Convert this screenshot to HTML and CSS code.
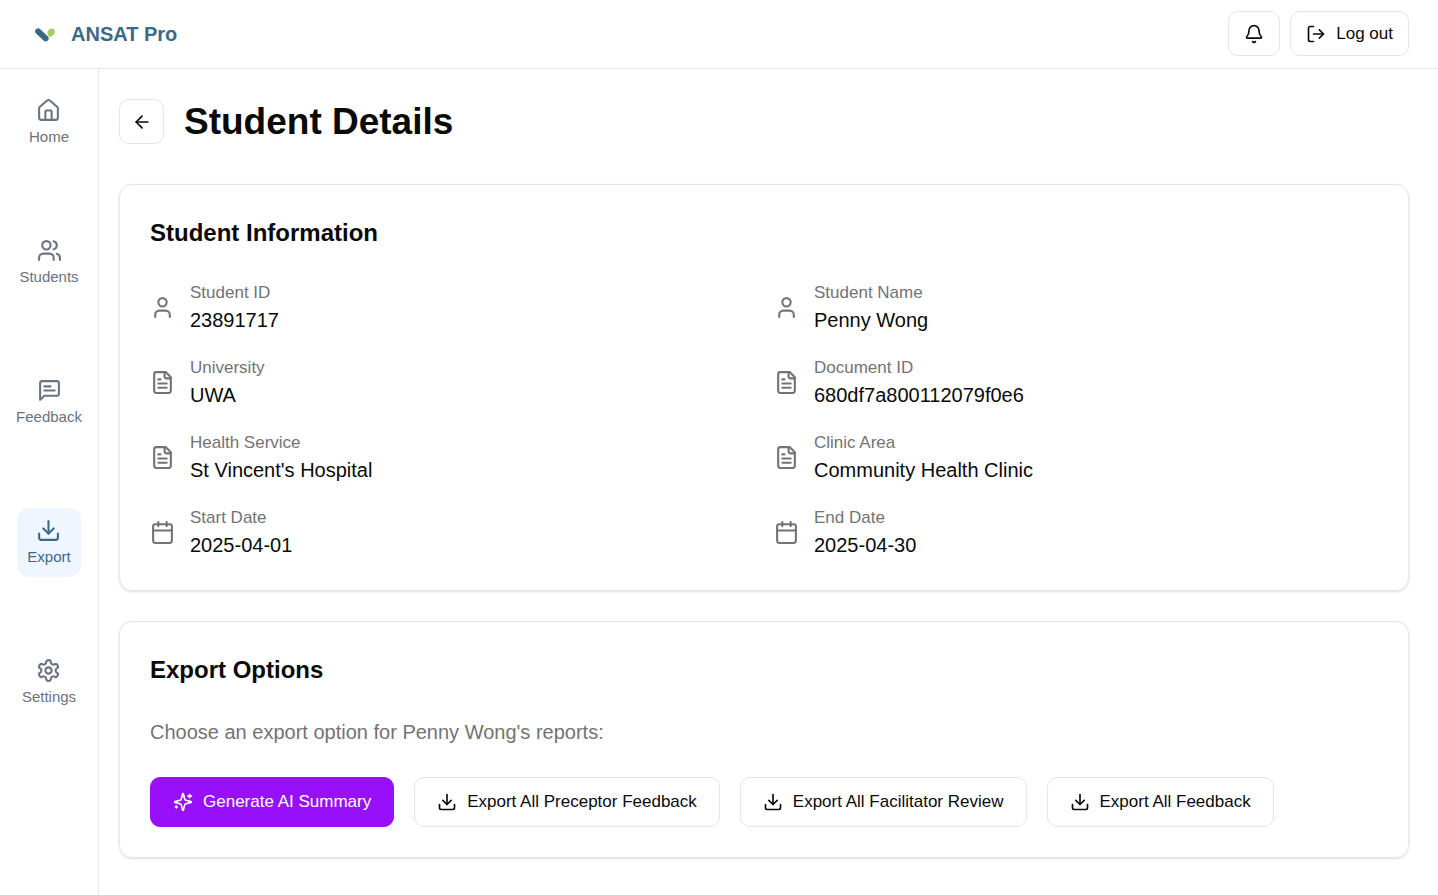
FILE: index.html
```html
<!DOCTYPE html>
<html lang="en">
<head>
<meta charset="utf-8">
<meta name="viewport" content="width=device-width, initial-scale=1">
<title>ANSAT Pro - Student Details</title>
<link rel="stylesheet" href="styles.css">
</head>
<body>
<svg class="sprite" aria-hidden="true">
  <symbol id="home" viewBox="0 0 24 24"><path d="M15 21v-8a1 1 0 0 0-1-1h-4a1 1 0 0 0-1 1v8"/><path d="M3 10a2 2 0 0 1 .709-1.528l7-5.999a2 2 0 0 1 2.582 0l7 5.999A2 2 0 0 1 21 10v9a2 2 0 0 1-2 2H5a2 2 0 0 1-2-2z"/></symbol>
  <symbol id="users" viewBox="0 0 24 24"><path d="M16 21v-2a4 4 0 0 0-4-4H6a4 4 0 0 0-4 4v2"/><circle cx="9" cy="7" r="4"/><path d="M22 21v-2a4 4 0 0 0-3-3.87"/><path d="M16 3.13a4 4 0 0 1 0 7.75"/></symbol>
  <symbol id="message" viewBox="0 0 24 24"><path d="M21 15a2 2 0 0 1-2 2H7l-4 4V5a2 2 0 0 1 2-2h14a2 2 0 0 1 2 2z"/><path d="M13 8H7"/><path d="M17 12H7"/></symbol>
  <symbol id="download" viewBox="0 0 24 24"><path d="M21 15v4a2 2 0 0 1-2 2H5a2 2 0 0 1-2-2v-4"/><path d="m7 10 5 5 5-5"/><path d="M12 15V3"/></symbol>
  <symbol id="settings" viewBox="0 0 24 24"><path d="M12.22 2h-.44a2 2 0 0 0-2 2v.18a2 2 0 0 1-1 1.73l-.43.25a2 2 0 0 1-2 0l-.15-.08a2 2 0 0 0-2.73.73l-.22.38a2 2 0 0 0 .73 2.73l.15.1a2 2 0 0 1 1 1.72v.51a2 2 0 0 1-1 1.74l-.15.09a2 2 0 0 0-.73 2.73l.22.38a2 2 0 0 0 2.73.73l.15-.08a2 2 0 0 1 2 0l.43.25a2 2 0 0 1 1 1.73V20a2 2 0 0 0 2 2h.44a2 2 0 0 0 2-2v-.18a2 2 0 0 1 1-1.73l.43-.25a2 2 0 0 1 2 0l.15.08a2 2 0 0 0 2.73-.73l.22-.39a2 2 0 0 0-.73-2.73l-.15-.08a2 2 0 0 1-1-1.74v-.5a2 2 0 0 1 1-1.74l.15-.09a2 2 0 0 0 .73-2.73l-.22-.38a2 2 0 0 0-2.73-.73l-.15.08a2 2 0 0 1-2 0l-.43-.25a2 2 0 0 1-1-1.73V4a2 2 0 0 0-2-2z"/><circle cx="12" cy="12" r="3"/></symbol>
  <symbol id="bell" viewBox="0 0 24 24"><path d="M10.268 21a2 2 0 0 0 3.464 0"/><path d="M3.262 15.326A1 1 0 0 0 4 17h16a1 1 0 0 0 .74-1.673C19.41 13.956 18 12.499 18 8A6 6 0 0 0 6 8c0 4.499-1.411 5.956-2.738 7.326"/></symbol>
  <symbol id="logout" viewBox="0 0 24 24"><path d="M9 21H5a2 2 0 0 1-2-2V5a2 2 0 0 1 2-2h4"/><path d="m16 17 5-5-5-5"/><path d="M21 12H9"/></symbol>
  <symbol id="back" viewBox="0 0 24 24"><path d="m12 19-7-7 7-7"/><path d="M19 12H5"/></symbol>
  <symbol id="user" viewBox="0 0 24 24"><path d="M19 21v-2a4 4 0 0 0-4-4H9a4 4 0 0 0-4 4v2"/><circle cx="12" cy="7" r="4"/></symbol>
  <symbol id="file" viewBox="0 0 24 24"><path d="M15 2H6a2 2 0 0 0-2 2v16a2 2 0 0 0 2 2h12a2 2 0 0 0 2-2V7Z"/><path d="M14 2v4a2 2 0 0 0 2 2h4"/><path d="M10 9H8"/><path d="M16 13H8"/><path d="M16 17H8"/></symbol>
  <symbol id="calendar" viewBox="0 0 24 24"><path d="M8 2v4"/><path d="M16 2v4"/><rect width="18" height="18" x="3" y="4" rx="2"/><path d="M3 10h18"/></symbol>
  <symbol id="sparkles" viewBox="0 0 24 24"><path d="M9.937 15.5A2 2 0 0 0 8.5 14.063l-6.135-1.582a.5.5 0 0 1 0-.962L8.5 9.936A2 2 0 0 0 9.937 8.5l1.582-6.135a.5.5 0 0 1 .963 0L14.063 8.5A2 2 0 0 0 15.5 9.937l6.135 1.581a.5.5 0 0 1 0 .964L15.5 14.063a2 2 0 0 0-1.437 1.437l-1.582 6.135a.5.5 0 0 1-.963 0z"/><path d="M20 3v4"/><path d="M22 5h-4"/><path d="M4 17v2"/><path d="M5 18H3"/></symbol>
</svg>

<header class="topbar">
  <a class="brand" href="#">
    <svg class="brand-mark" viewBox="0 0 30 30" aria-hidden="true">
      <path class="leaf" d="M19.8 18.2C18.6 17.2 17.6 15.6 17.3 14 17.6 11.4 19.4 9.4 21.8 9.4 23.8 9.4 25.1 10.9 25 12.8 24.8 15 22.6 16.6 19.8 18.2Z"/>
      <path class="stem" d="M8.2 12.4 15.6 19.4"/>
    </svg>
    <span>ANSAT Pro</span>
  </a>
  <div class="topbar-actions">
    <button class="btn btn-compact" type="button" aria-label="Notifications"><svg class="icon"><use href="#bell"/></svg></button>
    <button class="btn btn-compact" type="button"><svg class="icon"><use href="#logout"/></svg>Log out</button>
  </div>
</header>

<div class="shell">
  <nav class="sidebar" aria-label="Main">
    <a class="nav-item" href="#"><svg class="icon icon-lg"><use href="#home"/></svg>Home</a>
    <a class="nav-item" href="#"><svg class="icon icon-lg"><use href="#users"/></svg>Students</a>
    <a class="nav-item" href="#"><svg class="icon icon-lg"><use href="#message"/></svg>Feedback</a>
    <a class="nav-item active" href="#" aria-current="page"><svg class="icon icon-lg"><use href="#download"/></svg>Export</a>
    <a class="nav-item" href="#"><svg class="icon icon-lg"><use href="#settings"/></svg>Settings</a>
  </nav>

  <main class="content">
    <div class="page-head">
      <button class="btn btn-square" type="button" aria-label="Back"><svg class="icon"><use href="#back"/></svg></button>
      <h1 class="page-title">Student Details</h1>
    </div>

    <section class="card">
      <h2 class="card-title">Student Information</h2>
      <dl class="info-grid">
        <div class="info"><svg class="icon icon-lg"><use href="#user"/></svg><div><dt>Student ID</dt><dd>23891717</dd></div></div>
        <div class="info"><svg class="icon icon-lg"><use href="#user"/></svg><div><dt>Student Name</dt><dd>Penny Wong</dd></div></div>
        <div class="info"><svg class="icon icon-lg"><use href="#file"/></svg><div><dt>University</dt><dd>UWA</dd></div></div>
        <div class="info"><svg class="icon icon-lg"><use href="#file"/></svg><div><dt>Document ID</dt><dd>680df7a800112079f0e6</dd></div></div>
        <div class="info"><svg class="icon icon-lg"><use href="#file"/></svg><div><dt>Health Service</dt><dd>St Vincent's Hospital</dd></div></div>
        <div class="info"><svg class="icon icon-lg"><use href="#file"/></svg><div><dt>Clinic Area</dt><dd>Community Health Clinic</dd></div></div>
        <div class="info"><svg class="icon icon-lg"><use href="#calendar"/></svg><div><dt>Start Date</dt><dd>2025-04-01</dd></div></div>
        <div class="info"><svg class="icon icon-lg"><use href="#calendar"/></svg><div><dt>End Date</dt><dd>2025-04-30</dd></div></div>
      </dl>
    </section>

    <section class="card">
      <h2 class="card-title">Export Options</h2>
      <p class="hint">Choose an export option for Penny Wong's reports:</p>
      <div class="actions">
        <button class="btn btn-primary" type="button"><svg class="icon"><use href="#sparkles"/></svg>Generate AI Summary</button>
        <button class="btn" type="button"><svg class="icon"><use href="#download"/></svg>Export All Preceptor Feedback</button>
        <button class="btn" type="button"><svg class="icon"><use href="#download"/></svg>Export All Facilitator Review</button>
        <button class="btn" type="button"><svg class="icon"><use href="#download"/></svg>Export All Feedback</button>
      </div>
    </section>
  </main>
</div>
</body>
</html>
```

FILE: styles.css
```css
* {
  box-sizing: border-box;
}

body {
  margin: 0;
  min-height: 100vh;
  display: flex;
  flex-direction: column;
  background: #fff;
  color: #0a0a0a;
  font-family: "Liberation Sans", Arial, sans-serif;
  font-size: 20px;
  line-height: 30px;
}

h1, h2, p, dl, dd {
  margin: 0;
}

a {
  color: inherit;
  text-decoration: none;
}

.sprite {
  position: absolute;
  width: 0;
  height: 0;
}

.icon {
  width: 20px;
  height: 20px;
  flex: none;
  fill: none;
  stroke: currentColor;
  stroke-width: 2;
  stroke-linecap: round;
  stroke-linejoin: round;
}

.icon-lg {
  width: 25px;
  height: 25px;
}

.topbar {
  display: flex;
  align-items: center;
  justify-content: space-between;
  padding: 11px 29px 12px 30px;
  border-bottom: 1px solid #e5e7eb;
}

.brand {
  display: flex;
  align-items: center;
  gap: 11px;
  color: #3a6a88;
  font-weight: 700;
}

.brand-mark {
  width: 30px;
  height: 30px;
}

.leaf {
  fill: #a5cf5f;
}

.stem {
  fill: none;
  stroke: #386785;
  stroke-width: 6;
  stroke-linecap: round;
}

.topbar-actions {
  display: flex;
  gap: 10px;
}

.btn {
  display: inline-flex;
  align-items: center;
  justify-content: center;
  gap: 10px;
  height: 50px;
  padding: 0 22px;
  border: 1px solid #e5e5e5;
  border-radius: 10px;
  background: #fff;
  color: #0a0a0a;
  font: inherit;
  font-size: 17px;
  white-space: nowrap;
  cursor: pointer;
}

.btn-compact {
  height: 45px;
  padding: 0 15px;
}

.btn-square {
  width: 45px;
  height: 45px;
  padding: 0;
}

.btn-primary {
  border-color: #9810fa;
  background: #9810fa;
  color: #fff;
}

.shell {
  flex: 1;
  display: flex;
}

.sidebar {
  flex: none;
  width: 99px;
  display: flex;
  flex-direction: column;
  align-items: center;
  gap: 71px;
  padding: 19px 0;
  border-right: 1px solid #e5e7eb;
}

.nav-item {
  display: flex;
  flex-direction: column;
  align-items: center;
  gap: 4px;
  padding: 10px;
  border-radius: 12px;
  color: #6b7280;
  font-size: 15px;
  line-height: 20px;
}

.nav-item.active {
  background: #eff6ff;
  color: #3a6a88;
}

.content {
  flex: 1;
  min-width: 0;
  display: flex;
  flex-direction: column;
  gap: 30px;
  padding: 30px 29px 30px 20px;
}

.page-head {
  display: flex;
  align-items: center;
  gap: 20px;
  padding-bottom: 10px;
}

.page-title {
  font-size: 37px;
  line-height: 45px;
}

.card {
  display: flex;
  flex-direction: column;
  gap: 30px;
  padding: 30px;
  border: 1px solid #e5e5e5;
  border-radius: 13px;
  box-shadow: 0 1px 3px rgba(0, 0, 0, 0.1), 0 1px 2px -1px rgba(0, 0, 0, 0.1);
}

.card-title {
  font-size: 24px;
  line-height: 35px;
}

.info-grid {
  display: grid;
  grid-template-columns: 1fr 1fr;
  gap: 20px;
}

.info {
  display: flex;
  align-items: center;
  gap: 15px;
}

.info .icon {
  color: #737373;
}

.info dt {
  color: #737373;
  font-size: 17px;
  line-height: 25px;
}

.hint {
  color: #737373;
}

.actions {
  display: flex;
  flex-wrap: wrap;
  gap: 20px;
}
```
